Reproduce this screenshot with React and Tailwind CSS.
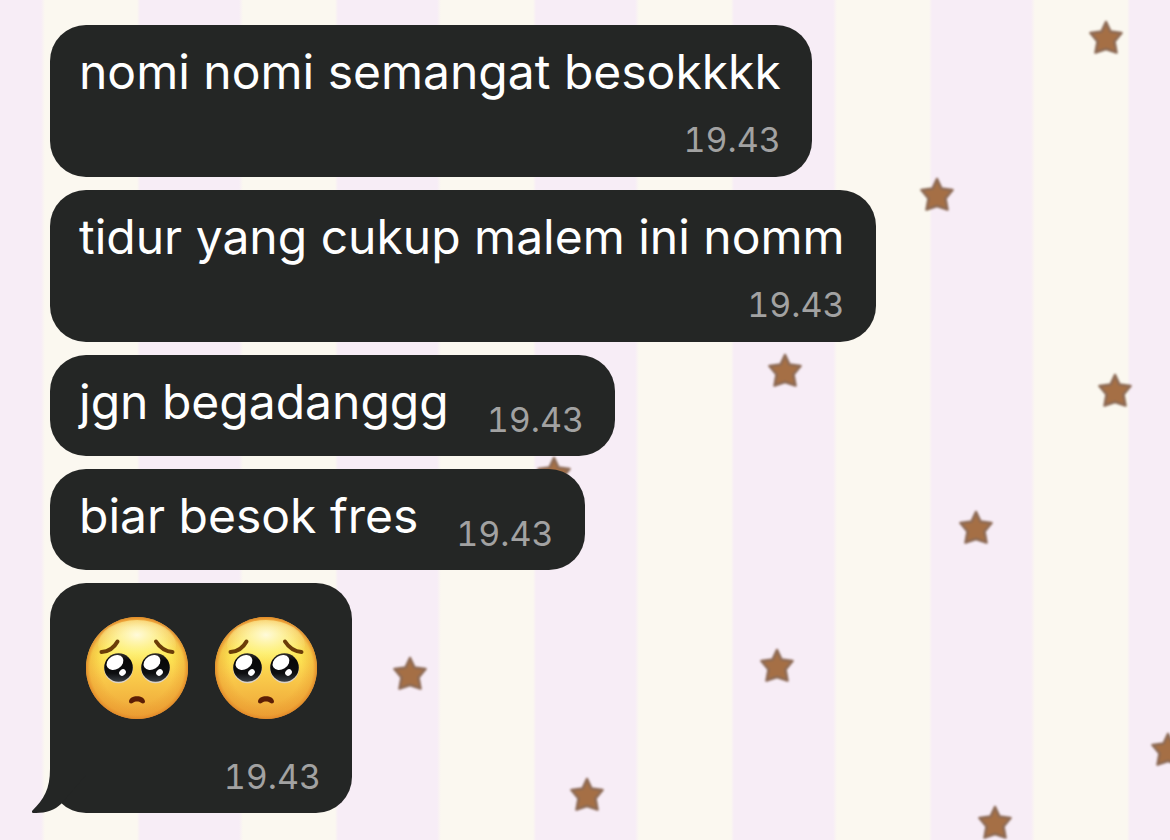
import React from 'react';

const messages = [
  { id: 1, text: 'nomi nomi semangat besokkkk', time: '19.43', stacked: true },
  { id: 2, text: 'tidur yang cukup malem ini nomm', time: '19.43', stacked: true },
  { id: 3, text: 'jgn begadanggg', time: '19.43' },
  { id: 4, text: 'biar besok fres', time: '19.43' },
];

// Star centres on the wallpaper
const stars = [
  { x: 1106, y: 38 },
  { x: 937, y: 195 },
  { x: 785, y: 371 },
  { x: 1115, y: 391 },
  { x: 554, y: 474 },
  { x: 976, y: 528 },
  { x: 410, y: 674 },
  { x: 777, y: 666 },
  { x: 1168, y: 750 },
  { x: 587, y: 795 },
  { x: 995, y: 823 },
];

const Star = ({ x, y }) => (
  <svg
    viewBox="0 0 40 40"
    className="absolute h-10 w-10 -translate-x-1/2 -translate-y-1/2 blur-[1px]"
    style={{ left: x, top: y }}
    aria-hidden="true"
  >
    <path
      d="M20 4L24.5 13.5L35.5 15L28.5 23.5L30.5 34.5L20 31L9.5 34.5L11.5 23.5L4.5 15L15.5 13.5Z"
      fill="#a56f45"
      stroke="#8c6a55"
      strokeWidth="2.5"
      strokeLinejoin="round"
    />
  </svg>
);

const Wallpaper = () => (
  <div className="absolute inset-0 overflow-hidden bg-[repeating-linear-gradient(90deg,#f7edf6_0px,#f7edf6_99px,#fbf8f0_103px,#fbf8f0_195px,#f7edf6_198px)] bg-[position:-58px_0] [background-size:calc(100%+58px)_100%]">
    {stars.map((star, index) => (
      <Star key={index} x={star.x} y={star.y} />
    ))}
  </div>
);

const PleadingFace = ({ id }) => (
  <svg viewBox="0 0 102 102" className="h-[102px] w-[102px]" role="img" aria-label="Pleading face">
    <defs>
      <linearGradient id={`${id}-skin`} x1="0" y1="0" x2="0" y2="1">
        <stop offset="0" stopColor="#f8b93c" />
        <stop offset="0.1" stopColor="#fbe17c" />
        <stop offset="0.35" stopColor="#fdea55" />
        <stop offset="0.6" stopColor="#f9c94a" />
        <stop offset="1" stopColor="#eda236" />
      </linearGradient>
      <radialGradient id={`${id}-edge`} cx="0.5" cy="0.5" r="0.5">
        <stop offset="0.7" stopColor="#e8902a" stopOpacity="0" />
        <stop offset="0.92" stopColor="#e8942c" stopOpacity="0.4" />
        <stop offset="1" stopColor="#e08427" stopOpacity="0.9" />
      </radialGradient>
      <radialGradient id={`${id}-shine`} cx="0.5" cy="0.3" r="0.65">
        <stop offset="0" stopColor="#fffbe0" stopOpacity="0.95" />
        <stop offset="0.5" stopColor="#fff9a8" stopOpacity="0.5" />
        <stop offset="1" stopColor="#fff27a" stopOpacity="0" />
      </radialGradient>
      <linearGradient id={`${id}-eye`} x1="0" y1="0" x2="0" y2="1">
        <stop offset="0" stopColor="#33302c" />
        <stop offset="0.25" stopColor="#070708" />
        <stop offset="0.7" stopColor="#0d0e10" />
        <stop offset="1" stopColor="#3a3f44" />
      </linearGradient>
    </defs>
    <circle cx="51" cy="51" r="51" fill={`url(#${id}-skin)`} />
    <circle cx="51" cy="51" r="51" fill={`url(#${id}-edge)`} />
    <ellipse cx="51" cy="28" rx="39" ry="25" fill={`url(#${id}-shine)`} />

    {/* Brows */}
    <path d="M15.5 35Q26 34.5 31.5 24.5" fill="none" stroke="#6b3d08" strokeWidth="4" strokeLinecap="round" />
    <path d="M86.5 35Q76 34 70 24.5" fill="none" stroke="#6b3d08" strokeWidth="4" strokeLinecap="round" />

    {/* Eyes */}
    {[32.5, 69.5].map((cx) => (
      <g key={cx}>
        <circle cx={cx} cy="52" r="14.3" fill="#ddd3c4" />
        <circle cx={cx} cy="50.5" r="14.3" fill={`url(#${id}-eye)`} />
        <ellipse cx={cx - 3.5} cy="45.5" rx="9" ry="6.8" transform={`rotate(-32 ${cx - 3.5} 45.5)`} fill="#fff" />
        <ellipse cx={cx + 4} cy="55.5" rx="3.6" ry="2.9" transform={`rotate(-40 ${cx + 4} 55.5)`} fill="#fff" />
      </g>
    ))}

    {/* Mouth */}
    <path
      d="M43 84.5C43.5 77.5 58.5 77.5 59 84.5C59 86.5 56.5 87 55 85.7C53 84.2 49 84.2 47 85.7C45.5 87 43 86.5 43 84.5Z"
      fill="#5c1e05"
    />
  </svg>
);

const Time = ({ children }) => (
  <time className="text-[34px] leading-[44px] text-[#a2a2a2] tabular-nums">{children}</time>
);

const Bubble = ({ text, time, stacked }) => (
  <li
    className={`flex w-fit rounded-[36px] bg-[#242625] pt-[15px] pr-[31px] pl-[29px] ${
      stacked ? 'flex-col pb-[15px]' : 'items-end gap-[38px] pb-[14px]'
    }`}
  >
    <p className={`text-[48px] leading-[64px] text-white ${stacked ? 'mb-[14px]' : 'mb-2'}`}>{text}</p>
    <span className="flex justify-end">
      <Time>{time}</Time>
    </span>
  </li>
);

const App = () => {
  return (
    <main className="relative min-h-screen overflow-hidden font-['Inter',sans-serif]">
      <Wallpaper />
      <ul className="relative flex flex-col gap-[13px] pt-[25px] pb-[26px] pl-[50px]">
        {messages.map((message) => (
          <Bubble key={message.id} {...message} />
        ))}

        {/* Last message of the group carries the tail */}
        <li className="relative flex w-fit flex-col rounded-[36px] bg-[#242625] pt-[34px] pr-[31px] pb-[14px] pl-[29px]">
          <svg viewBox="0 0 60 60" className="absolute bottom-0 -left-[18px] h-[60px] w-[60px]" aria-hidden="true">
            <path d="M18 0V16C18 36 12 46 0 58C-1 60 1 60 4 60C14 60 23 57 29 51L54 22V0Z" fill="#242625" />
          </svg>
          <div className="mb-9 flex gap-[27px] pr-1 pl-[7px]">
            <PleadingFace id="face-left" />
            <PleadingFace id="face-right" />
          </div>
          <span className="relative flex justify-end">
            <Time>19.43</Time>
          </span>
        </li>
      </ul>
    </main>
  );
};

export default App;
